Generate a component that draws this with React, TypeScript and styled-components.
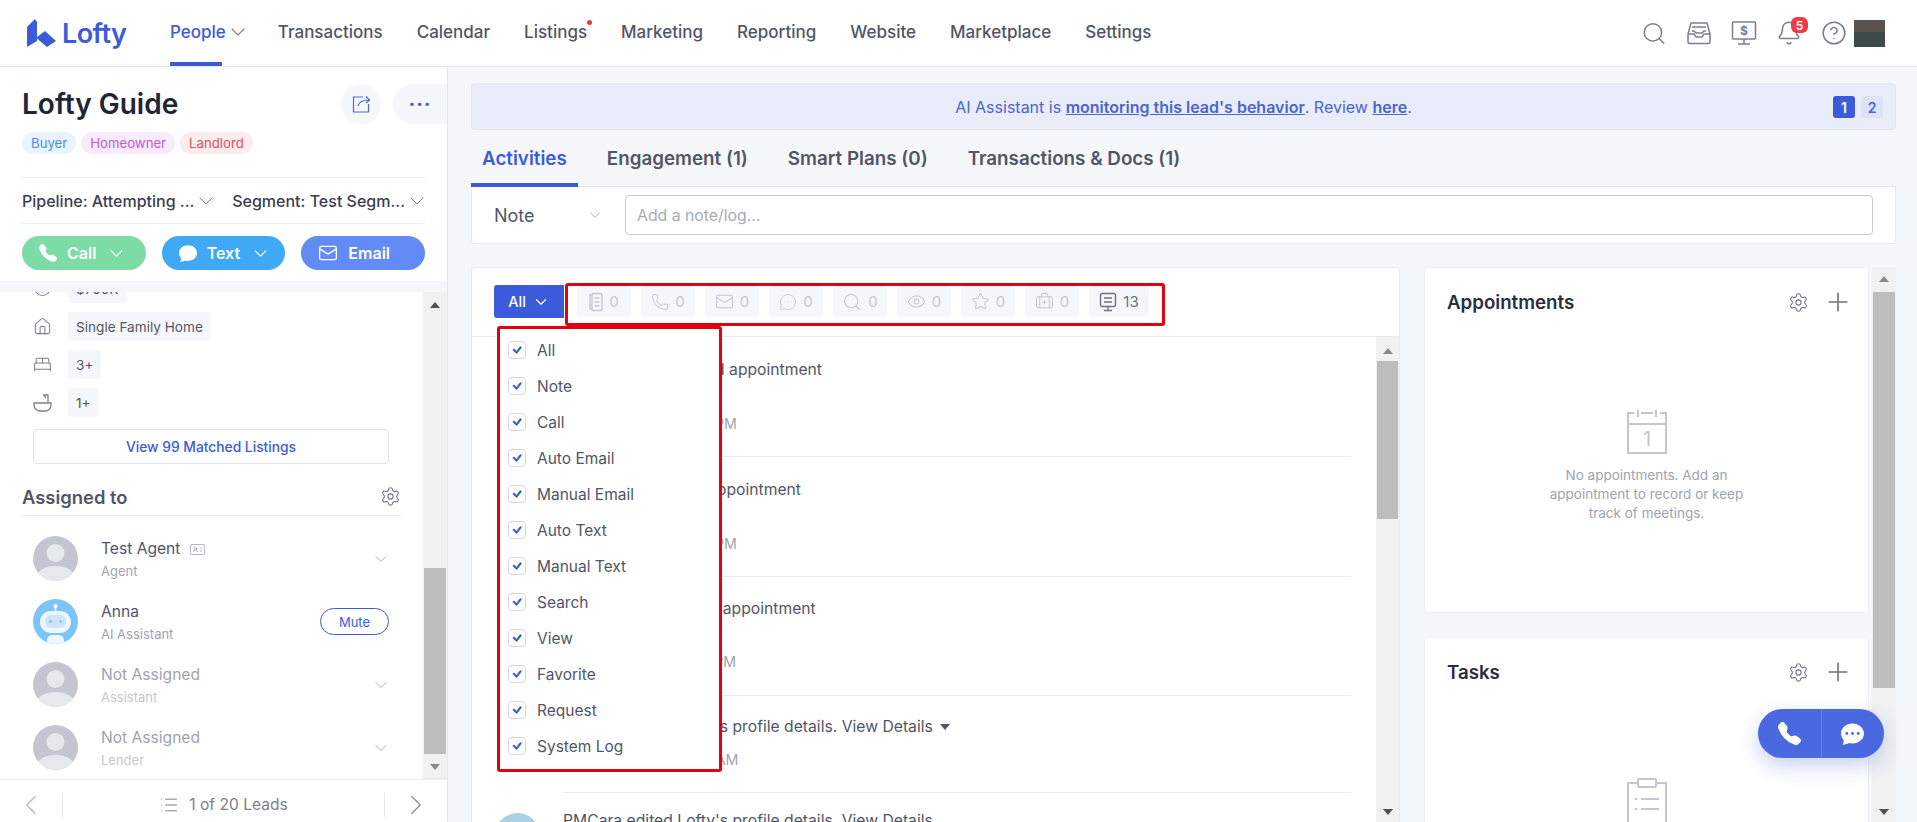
import { ReactNode } from 'react';
import styled, { createGlobalStyle } from 'styled-components';
import { BsTelephoneFill, BsChatFill, BsChatDotsFill, BsCheck } from 'react-icons/bs';
import {
  Search,
  Bell,
  CircleHelp,
  ChevronDown,
  ChevronLeft,
  ChevronRight,
  Settings,
  Plus,
  Mail,
  Phone,
  MessageCircleMore,
  Eye,
  Star,
  BriefcaseMedical,
  Home,
  BedDouble,
  List,
  IdCard,
  CircleDollarSign,
} from 'lucide-react';

const GlobalStyles = createGlobalStyle`
  html, body { margin: 0; padding: 0; height: 100%; overflow: hidden; }
  body {
    font-family: Inter, "Liberation Sans", sans-serif;
    color: #515666;
    background: #fff;
  }
  * { box-sizing: border-box; }
`;

const blue = '#3b5bdb';

const Page = styled.div`
  width: 1917px;
  height: 822px;
  display: flex;
  flex-direction: column;
  position: relative;
  overflow: hidden;
`;

const Header = styled.header`
  height: 67px;
  flex: none;
  display: flex;
  align-items: stretch;
  border-bottom: 1px solid #e3e6ef;
  background: #fff;
  padding-left: 27px;
`;

const Logo = styled.div`
  display: flex;
  align-items: center;
  gap: 6px;
  width: 143px;
  color: ${blue};
  font-size: 27px;
  font-weight: 600;
  letter-spacing: -0.6px;
`;

const Nav = styled.nav`
  display: flex;
  gap: 34px;
  flex: 1;
`;

const NavItem = styled.a<{ $active?: boolean }>`
  position: relative;
  display: flex;
  align-items: center;
  font-size: 17px;
  font-weight: 500;
  padding-bottom: 2px;
  color: ${(p) => (p.$active ? blue : '#515666')};
  height: 66px;
  svg { margin-right: -6px; }
  &::after {
    content: '';
    display: ${(p) => (p.$active ? 'block' : 'none')};
    position: absolute;
    left: 0;
    bottom: 0;
    width: 52px;
    height: 4px;
    background: ${blue};
  }
`;

const NavDot = styled.span`
  position: absolute;
  right: -5px;
  top: 20px;
  width: 5px;
  height: 5px;
  border-radius: 50%;
  background: #e5383b;
`;

const HeaderTools = styled.div`
  display: flex;
  align-items: center;
  gap: 19px;
  padding-right: 32px;
  color: #7d808a;
`;

const ToolIcon = styled.span`
  position: relative;
  width: 26px;
  height: 26px;
  display: flex;
  align-items: center;
  justify-content: center;
`;

const Badge = styled.span`
  position: absolute;
  left: 15px;
  top: -3px;
  min-width: 17px;
  height: 16px;
  border-radius: 6px;
  background: #ee3b4a;
  color: #fff;
  font-size: 12px;
  font-weight: 600;
  display: flex;
  align-items: center;
  justify-content: center;
`;

const AvatarBlock = styled.div`
  width: 31px;
  height: 27px;
  margin-left: -12px;
  background: linear-gradient(#5b514d 0 46%, #3e4a47 46% 100%);
`;

const Body = styled.div`
  flex: 1;
  min-height: 0;
  display: flex;
`;

const LeftPanel = styled.aside`
  width: 448px;
  flex: none;
  display: flex;
  flex-direction: column;
  border-right: 1px solid #e3e6ef;
  background: #fff;
`;

const LeadTop = styled.div`
  flex: none;
  height: 214px;
  padding: 15px 22px 0;
  display: flex;
  flex-direction: column;
`;

const TitleRow = styled.div`
  display: flex;
  align-items: center;
  height: 44px;
  margin-right: -22px;
`;

const LeadName = styled.h1`
  flex: 1;
  margin: 0;
  font-size: 28px;
  font-weight: 600;
  color: #202437;
`;

const RoundButton = styled.span<{ $clipped?: boolean }>`
  width: ${(p) => (p.$clipped ? '54px' : '40px')};
  height: 40px;
  margin-left: ${(p) => (p.$clipped ? '12px' : '0')};
  border-radius: ${(p) => (p.$clipped ? '20px 0 0 20px' : '50%')};
  background: #f6f7fb;
  color: ${blue};
  display: flex;
  align-items: center;
  justify-content: center;
  font-size: 20px;
  font-weight: 700;
  letter-spacing: 1px;
`;

const Tags = styled.div`
  display: flex;
  gap: 5px;
  margin-top: 6px;
`;

const Tag = styled.span<{ $bg: string; $fg: string }>`
  height: 22px;
  padding: 0 9px;
  border-radius: 11px;
  background: ${(p) => p.$bg};
  color: ${(p) => p.$fg};
  font-size: 13.2px;
  display: flex;
  align-items: center;
`;

const PipelineRow = styled.div`
  margin-top: 23px;
  height: 47px;
  border-top: 1px solid #ebedf3;
  border-bottom: 1px solid #ebedf3;
  display: flex;
  align-items: center;
  justify-content: space-between;
`;

const PipelineItem = styled.span`
  display: flex;
  align-items: center;
  font-size: 16px;
  font-weight: 500;
  color: #3a3f4f;
  svg { color: #7d808a; margin-right: -4px; }
`;

const ActionRow = styled.div`
  margin-top: 12px;
  display: flex;
  gap: 16px;
`;

const ActionButton = styled.span<{ $bg: string }>`
  width: 124px;
  height: 34px;
  border-radius: 17px;
  padding-left: 17px;
  background: ${(p) => p.$bg};
  color: #fff;
  font-size: 16px;
  font-weight: 600;
  display: flex;
  align-items: center;
  gap: 10px;
`;

const Band = styled.div`
  height: 11px;
  flex: none;
  background: #f6f7fb;
`;

const LeadScroll = styled.div`
  flex: 1;
  min-height: 0;
  display: flex;
  overflow: hidden;
`;

const LeadContent = styled.div`
  flex: 1;
  min-width: 0;
  padding: 0 22px;
  display: flex;
  flex-direction: column;
`;

const FactRow = styled.div`
  display: flex;
  align-items: center;
  gap: 16px;
  height: 29px;
  margin-bottom: 9px;
  padding-left: 11px;
  color: #7d808a;
  flex: none;
`;

const ClippedFact = styled(FactRow)`
  height: 11px;
  margin-bottom: 9px;
  overflow: hidden;
  align-items: flex-end;
  svg { margin-bottom: 6px; flex: none; }
`;

const FactChip = styled.span`
  height: 29px;
  padding: 0 8px;
  border-radius: 3px;
  background: #f6f7fb;
  color: #515666;
  font-size: 13.6px;
  display: flex;
  align-items: center;
  flex: none;
`;

const MatchedButton = styled.div`
  flex: none;
  height: 35px;
  margin: 3px 12px 0 11px;
  border: 1px solid #e1e3ea;
  border-radius: 4px;
  color: ${blue};
  font-size: 13.8px;
  font-weight: 500;
  display: flex;
  align-items: center;
  justify-content: center;
`;

const AssignedHead = styled.div`
  flex: none;
  margin-top: 14px;
  height: 38px;
  border-bottom: 1px solid #ebedf3;
  display: flex;
  align-items: center;
  justify-content: space-between;
  font-size: 18.4px;
  font-weight: 600;
  color: #515666;
  svg { color: #6f7280; }
`;

const PersonList = styled.div`
  flex: none;
  padding-top: 11px;
`;

const Person = styled.div`
  height: 63px;
  display: flex;
  align-items: center;
  padding: 0 12px 0 11px;
  gap: 23px;
`;

const PersonAvatar = styled.span`
  width: 45px;
  height: 45px;
  flex: none;
  display: block;
`;

const PersonInfo = styled.div`
  flex: 1;
  min-width: 0;
  padding-top: 2px;
  display: flex;
  flex-direction: column;
  gap: 5px;
`;

const PersonName = styled.div<{ $muted?: boolean }>`
  display: flex;
  align-items: center;
  gap: 9px;
  font-size: 15.6px;
  line-height: 18px;
  color: ${(p) => (p.$muted ? '#a0a3af' : '#515666')};
`;

const PersonRole = styled.div<{ $muted?: boolean }>`
  font-size: 13px;
  line-height: 16px;
  color: ${(p) => (p.$muted ? '#c6c8d0' : '#a0a3af')};
`;

const PersonChevron = styled.span`
  color: #a0a3af;
  display: flex;
  margin-right: -2px;
`;

const MuteButton = styled.span`
  width: 69px;
  height: 27px;
  border: 1px solid ${blue};
  border-radius: 14px;
  color: ${blue};
  font-size: 13px;
  display: flex;
  align-items: center;
  justify-content: center;
`;

const Scrollbar = styled.div<{ $w?: number }>`
  width: ${(p) => p.$w ?? 24}px;
  flex: none;
  background: #f1f1f1;
  display: flex;
  flex-direction: column;
  align-items: center;
`;

const ScrollArrow = styled.div<{ $down?: boolean; $dark?: boolean; $h?: number }>`
  flex: none;
  height: ${(p) => p.$h ?? 20}px;
  display: flex;
  align-items: center;
  &::before {
    content: '';
    border-left: 5px solid transparent;
    border-right: 5px solid transparent;
    ${(p) => (p.$down ? 'border-top' : 'border-bottom')}: 6px solid ${(p) => (p.$dark ? '#50505a' : '#8a8a8a')};
  }
`;

const ScrollGap = styled.div<{ $h?: number; $grow?: boolean }>`
  flex: ${(p) => (p.$grow ? 1 : 'none')};
  height: ${(p) => p.$h ?? 0}px;
`;

const ScrollThumb = styled.div<{ $h: number }>`
  flex: none;
  width: calc(100% - 2px);
  height: ${(p) => p.$h}px;
  background: #bdbdbd;
`;

const LeadFooter = styled.div`
  flex: none;
  height: 43px;
  padding-top: 7px;
  border-top: 1px solid #eceef3;
  box-shadow: 0 -1px 3px rgba(0, 0, 0, 0.04);
  display: flex;
  align-items: center;
  color: #b4b6c0;
`;

const FooterSide = styled.div<{ $right?: boolean }>`
  width: 63px;
  height: 24px;
  display: flex;
  align-items: center;
  justify-content: center;
  ${(p) => (p.$right ? 'border-left' : 'border-right')}: 1px solid #e3e6ef;
`;

const FooterCenter = styled.div`
  flex: 1;
  display: flex;
  align-items: center;
  justify-content: center;
  gap: 10px;
  font-size: 15.6px;
  color: #7d808a;
`;

const Main = styled.main`
  flex: 1;
  min-width: 0;
  background: #f6f7fb;
  padding: 16px 21px 0 23px;
  display: flex;
  flex-direction: column;
`;

const Banner = styled.div`
  position: relative;
  flex: none;
  height: 47px;
  background: #e9edf9;
  border: 1px solid #e1e6f3;
  border-radius: 4px;
  display: flex;
  align-items: center;
  justify-content: center;
  font-size: 16px;
  color: #4a65d0;
  a {
    font-weight: 600;
    text-decoration: underline;
  }
`;

const BannerPager = styled.div`
  position: absolute;
  right: 12px;
  top: 12px;
  display: flex;
  gap: 6px;
`;

const PagerCell = styled.span<{ $active?: boolean }>`
  width: 22px;
  height: 22px;
  border-radius: 3px;
  background: ${(p) => (p.$active ? blue : '#dde3f7')};
  color: ${(p) => (p.$active ? '#fff' : '#4a65d0')};
  font-size: 14px;
  font-weight: 600;
  display: flex;
  align-items: center;
  justify-content: center;
`;

const Tabs = styled.div`
  flex: none;
  height: 57px;
  display: flex;
  border-bottom: 1px solid #e3e6ef;
`;

const Tab = styled.div<{ $active?: boolean }>`
  padding: 4px 11px 0;
  margin-right: 18px;
  display: flex;
  align-items: center;
  height: 57px;
  font-size: 18.8px;
  font-weight: 600;
  color: ${(p) => (p.$active ? blue : '#515666')};
  border-bottom: 4px solid ${(p) => (p.$active ? blue : 'transparent')};
`;

const NoteCard = styled.div`
  flex: none;
  height: 57px;
  background: #fff;
  border: 1px solid #e8eaf0;
  border-top: none;
  border-radius: 0 0 4px 4px;
  display: flex;
  align-items: center;
  padding: 0 22px 0 22px;
`;

const NoteType = styled.div`
  width: 131px;
  display: flex;
  align-items: center;
  justify-content: space-between;
  padding-right: 21px;
  font-size: 18px;
  color: #515666;
  svg { color: #a0a3af; }
`;

const NoteInput = styled.div`
  flex: 1;
  height: 40px;
  border: 1px solid #c9ccd4;
  border-radius: 4px;
  padding-left: 11px;
  display: flex;
  align-items: center;
  font-size: 15.8px;
  color: #a9acb6;
`;

const Columns = styled.div`
  flex: 1;
  min-height: 0;
  margin-top: 23px;
  display: flex;
  gap: 24px;
`;

const ActivityCard = styled.section`
  position: relative;
  width: 929px;
  flex: none;
  background: #fff;
  border: 1px solid #e8eaf0;
  border-bottom: none;
  border-radius: 4px 4px 0 0;
  display: flex;
  flex-direction: column;
`;

const FilterRow = styled.div`
  flex: none;
  height: 69px;
  border-bottom: 1px solid #e8eaf0;
  display: flex;
  align-items: center;
  padding-left: 22px;
`;

const AllButton = styled.span`
  width: 70px;
  height: 33px;
  margin-top: -1px;
  margin-right: 13px;
  border-radius: 3px 0 0 3px;
  background: ${blue};
  color: #fff;
  font-size: 14.5px;
  font-weight: 500;
  display: flex;
  align-items: center;
  justify-content: center;
  gap: 6px;
`;

const FilterChips = styled.div`
  display: flex;
  gap: 10px;
  margin-top: -1px;
`;

const FilterChip = styled.span<{ $on?: boolean }>`
  height: 31px;
  width: ${(p) => (p.$on ? '60px' : '54px')};
  border-radius: 4px;
  background: #f6f7fb;
  color: ${(p) => (p.$on ? '#6f7280' : '#c6c8d0')};
  font-size: 15px;
  display: flex;
  align-items: center;
  justify-content: center;
  gap: 6px;
`;

const RedBox = styled.div`
  position: absolute;
  left: 93px;
  top: 15px;
  width: 600px;
  height: 43px;
  border: 3px solid #e3000f;
  border-radius: 3px;
  pointer-events: none;
`;

const Dropdown = styled.div`
  position: absolute;
  left: 25px;
  top: 58px;
  width: 225px;
  height: 446px;
  background: #fff;
  border: 3px solid #e3000f;
  border-radius: 3px;
  padding-top: 3px;
  display: flex;
  flex-direction: column;
  z-index: 2;
`;

const DropdownItem = styled.label`
  flex: none;
  height: 36px;
  display: flex;
  align-items: center;
  gap: 11px;
  padding-left: 8px;
  font-size: 15.5px;
  color: #515666;
`;

const CheckBox = styled.span`
  width: 18px;
  height: 18px;
  border: 1px solid #d6d8e2;
  border-radius: 4px;
  background: #fff;
  color: ${blue};
  display: flex;
  align-items: center;
  justify-content: center;
  flex: none;
`;

const ActivityBody = styled.div`
  flex: 1;
  min-height: 0;
  display: flex;
  overflow: hidden;
`;

const ActivityList = styled.div`
  flex: 1;
  min-width: 0;
  padding: 0 25px 0 23px;
  overflow: hidden;
`;

const ActivityRow = styled.div<{ $h: number; $pad: number; $line?: boolean }>`
  height: ${(p) => p.$h}px;
  position: relative;
  padding-left: 68px;
  padding-top: ${(p) => p.$pad}px;
  &::after {
    content: '';
    display: ${(p) => (p.$line ? 'block' : 'none')};
    position: absolute;
    left: 68px;
    right: 0;
    bottom: 0;
    height: 1px;
    background: #e8eaf0;
  }
`;

const RowTitle = styled.div`
  font-size: 15.7px;
  line-height: 18px;
  color: #515666;
  white-space: nowrap;
`;

const RowTime = styled.div<{ $gap: number }>`
  margin-top: ${(p) => p.$gap}px;
  font-size: 14.2px;
  line-height: 17px;
  color: #a0a3af;
`;

const Caret = styled.span`
  display: inline-block;
  margin-left: 7px;
  vertical-align: 2px;
  border-left: 5px solid transparent;
  border-right: 5px solid transparent;
  border-top: 6px solid #515666;
`;

const RowAvatar = styled.span`
  position: absolute;
  left: 0;
  top: 20px;
  width: 45px;
  height: 45px;
  border-radius: 50%;
  background: #a9d3e4;
`;

const SideColumn = styled.div`
  flex: 1;
  min-width: 0;
  display: flex;
  gap: 3px;
`;

const SideCards = styled.div`
  flex: 1;
  min-width: 0;
  display: flex;
  flex-direction: column;
  gap: 24px;
  overflow: hidden;
`;

const SideCard = styled.section<{ $h: number }>`
  flex: none;
  height: ${(p) => p.$h}px;
  background: #fff;
  border: 1px solid #eef0f5;
  border-radius: 4px;
  padding: 20px 15px 0 22px;
  display: flex;
  flex-direction: column;
`;

const SideHead = styled.div`
  flex: none;
  height: 28px;
  display: flex;
  align-items: center;
  gap: 14px;
  color: #6f7280;
  h3 {
    flex: 1;
    margin: 0;
    font-size: 18.7px;
    font-weight: 600;
    color: #2a2e3d;
  }
`;

const EmptyState = styled.div<{ $top: number }>`
  margin-top: ${(p) => p.$top}px;
  margin-right: 7px;
  display: flex;
  flex-direction: column;
  align-items: center;
  text-align: center;
  font-size: 13.5px;
  line-height: 19px;
  color: #a0a3af;
  svg { margin-bottom: 11px; }
`;

const FloatButton = styled.div`
  position: absolute;
  left: 1758px;
  top: 709px;
  width: 126px;
  height: 49px;
  border-radius: 25px;
  background: #4a68e0;
  box-shadow: 0 8px 20px rgba(74, 104, 224, 0.3);
  color: #fff;
  display: flex;
  z-index: 3;
`;

const FloatPart = styled.span<{ $border?: boolean }>`
  flex: 1;
  display: flex;
  align-items: center;
  justify-content: center;
  border-left: ${(p) => (p.$border ? '1px solid #6a83e6' : 'none')};
`;

const LogoMark = () => (
  <svg width="29" height="28" viewBox="0 0 29 28">
    <path d="M0 8 L8 0 L10 3 V18 L18 12 L29 22 L20 28 L10 19.5 V22 L0 28 Z" fill={blue} />
  </svg>
);

const InboxIcon = () => (
  <svg width="26" height="24" viewBox="0 0 26 24" fill="none" stroke="currentColor" strokeWidth="1.5">
    <path d="M2 13 L5 2 H21 L24 13 V21 a1.5 1.5 0 0 1-1.5 1.5 H3.5 A1.5 1.5 0 0 1 2 21 Z" />
    <path d="M6 6 H20 M2 13 H8 L10 16 H16 L18 13 H24" />
    <path d="M6 10 H8 L10 12 H16 L18 10 H20" />
  </svg>
);

const DollarMonitorIcon = () => (
  <svg width="26" height="26" viewBox="0 0 26 26" fill="none" stroke="currentColor" strokeWidth="1.5">
    <rect x="1.5" y="2" width="23" height="17" rx="1" />
    <path d="M13 19 V24 M7 24 H19" />
    <text x="13" y="15" fontSize="12" fontWeight="700" fill="currentColor" stroke="none" textAnchor="middle">$</text>
  </svg>
);

const NoteIcon = () => (
  <svg width="14" height="20" viewBox="0 0 14 20" fill="none" stroke="currentColor" strokeWidth="1.4">
    <rect x="3" y="1.5" width="10" height="17" rx="1" />
    <path d="M3 3 H1 V17 H3 M5.5 6 H10.5 M5.5 10 H10.5 M5.5 14 H10.5" />
  </svg>
);

const MonitorLinesIcon = () => (
  <svg width="18" height="20" viewBox="0 0 18 20" fill="none" stroke="currentColor" strokeWidth="1.4">
    <rect x="1.5" y="1.5" width="15" height="13" rx="2" />
    <path d="M5 6 H13 M5 10 H13 M9 14.5 V18.5 M5 18.5 H13" />
  </svg>
);

const ShareIcon = () => (
  <svg width="20" height="20" viewBox="0 0 20 20" fill="none" stroke="#4a68e0" strokeWidth="1.2">
    <path d="M12 3 H2.5 V18 H17.5 V10" />
    <path d="M7 12 C8 8 11 6 18 6 M15 2.5 L18.5 6 L15 9" />
  </svg>
);

const GuestAvatar = () => (
  <PersonAvatar>
    <svg width="45" height="45" viewBox="0 0 45 45">
      <defs>
        <clipPath id="guest-clip"><circle cx="22.5" cy="22.5" r="22.5" /></clipPath>
      </defs>
      <g clipPath="url(#guest-clip)">
        <rect width="45" height="45" fill="#c3c5d0" />
        <circle cx="22.5" cy="17" r="9" fill="#e7e8ee" />
        <ellipse cx="22.5" cy="41" rx="19" ry="11" fill="#e7e8ee" />
      </g>
    </svg>
  </PersonAvatar>
);

const RobotAvatar = () => (
  <PersonAvatar>
    <svg width="45" height="45" viewBox="0 0 45 45">
      <defs>
        <clipPath id="robot-clip"><circle cx="22.5" cy="22.5" r="22.5" /></clipPath>
      </defs>
      <g clipPath="url(#robot-clip)">
        <rect width="45" height="45" fill="#7cc4f8" />
        <path d="M22.5 6 V12" stroke="#fff" strokeWidth="1.6" />
        <circle cx="22.5" cy="7" r="2" fill="#fff" />
        <rect x="7" y="12" width="31" height="22" rx="11" fill="#eef6fd" />
        <rect x="12" y="16" width="21" height="13" rx="6" fill="#cfe3fa" />
        <circle cx="17.5" cy="22.5" r="1.4" fill="#7cc4f8" />
        <circle cx="27.5" cy="22.5" r="1.4" fill="#7cc4f8" />
        <rect x="14" y="36" width="17" height="12" rx="5" fill="#eef6fd" />
      </g>
    </svg>
  </PersonAvatar>
);

const CalendarEmpty = () => (
  <svg width="42" height="46" viewBox="0 0 42 46" fill="none" stroke="#c3c5d0" strokeWidth="2">
    <path d="M8 4 H2 V44 H40 V4 H34 M15 4 H27 M2 15 H40" />
    <path d="M12 1 V8 M30 1 V8" />
    <text x="21" y="37" fontSize="20" fill="#c3c5d0" stroke="none" textAnchor="middle">1</text>
  </svg>
);

const ClipboardEmpty = () => (
  <svg width="42" height="56" viewBox="0 0 42 56" fill="none" stroke="#c3c5d0" strokeWidth="2">
    <path d="M12 6 H2 V54 H40 V6 H30" />
    <rect x="12" y="2" width="18" height="8" rx="1" />
    <path d="M9 22 H11 M15 22 H33 M9 32 H11 M15 32 H33" />
  </svg>
);

const leadFacts: { icon: ReactNode; label: string }[] = [
  { icon: <Home size={19} strokeWidth={1.3} />, label: 'Single Family Home' },
  { icon: <BedDouble size={19} strokeWidth={1.3} />, label: '3+' },
  {
    icon: (
      <svg width="19" height="19" viewBox="0 0 19 19" fill="none" stroke="currentColor" strokeWidth="1.3">
        <path d="M1 10 H18 V12 a6 6 0 0 1-6 6 H7 a6 6 0 0 1-6-6 Z M15 10 V2 H10 M11 2 L13 5" />
      </svg>
    ),
    label: '1+',
  },
];

const people = [
  { name: 'Test Agent', role: 'Agent', card: true },
  { name: 'Anna', role: 'AI Assistant', robot: true },
  { name: 'Not Assigned', role: 'Assistant', muted: true },
  { name: 'Not Assigned', role: 'Lender', muted: true },
];

const chips: { icon: ReactNode; count: number }[] = [
  { icon: <NoteIcon />, count: 0 },
  { icon: <Phone size={18} strokeWidth={1.3} />, count: 0 },
  { icon: <Mail size={19} strokeWidth={1.3} />, count: 0 },
  { icon: <MessageCircleMore size={18} strokeWidth={1.3} />, count: 0 },
  { icon: <Search size={20} strokeWidth={1.3} />, count: 0 },
  { icon: <Eye size={19} strokeWidth={1.3} />, count: 0 },
  { icon: <Star size={19} strokeWidth={1.3} />, count: 0 },
  { icon: <BriefcaseMedical size={19} strokeWidth={1.3} />, count: 0 },
];

const filters = [
  'All',
  'Note',
  'Call',
  'Auto Email',
  'Manual Email',
  'Auto Text',
  'Manual Text',
  'Search',
  'View',
  'Favorite',
  'Request',
  'System Log',
];

const activities = [
  { h: 120, pad: 24, title: 'PMCara has arranged appointment', time: 'Nov 20, 2023 at 10:29 PM', gap: 36, line: true },
  { h: 120, pad: 24, title: 'PMCara has edited appointment', time: 'Nov 20, 2023 at 10:28 PM', gap: 36, line: true },
  { h: 119, pad: 23, title: 'PMCara has updated appointment', time: 'Nov 20, 2023 at 10:27 PM', gap: 35, line: true },
  { h: 97, pad: 22, title: "PMCara edited Lofty's profile details. View Details", time: 'Nov 20, 2023, at 10:12 AM', gap: 15, line: true, caret: true },
];

export default function App() {
  return (
    <Page>
      <GlobalStyles />
      <Header>
        <Logo>
          <LogoMark />
          Lofty
        </Logo>
        <Nav>
          <NavItem $active>
            People <ChevronDown size={24} strokeWidth={1.1} color="#7d808a" />
          </NavItem>
          <NavItem>Transactions</NavItem>
          <NavItem>Calendar</NavItem>
          <NavItem>
            Listings
            <NavDot />
          </NavItem>
          <NavItem>Marketing</NavItem>
          <NavItem>Reporting</NavItem>
          <NavItem>Website</NavItem>
          <NavItem>Marketplace</NavItem>
          <NavItem>Settings</NavItem>
        </Nav>
        <HeaderTools>
          <ToolIcon><Search size={27} strokeWidth={1.4} /></ToolIcon>
          <ToolIcon><InboxIcon /></ToolIcon>
          <ToolIcon><DollarMonitorIcon /></ToolIcon>
          <ToolIcon>
            <Bell size={26} strokeWidth={1.4} />
            <Badge>5</Badge>
          </ToolIcon>
          <ToolIcon><CircleHelp size={26} strokeWidth={1.4} /></ToolIcon>
          <AvatarBlock />
        </HeaderTools>
      </Header>
      <Body>
        <LeftPanel>
          <LeadTop>
            <TitleRow>
              <LeadName>Lofty Guide</LeadName>
              <RoundButton><ShareIcon /></RoundButton>
              <RoundButton $clipped>···</RoundButton>
            </TitleRow>
            <Tags>
              <Tag $bg="#eaf3fe" $fg="#4a90e8">Buyer</Tag>
              <Tag $bg="#f9ebfc" $fg="#b85cd8">Homeowner</Tag>
              <Tag $bg="#fdecec" $fg="#e2515c">Landlord</Tag>
            </Tags>
            <PipelineRow>
              <PipelineItem>Pipeline: Attempting ...<ChevronDown size={24} strokeWidth={1} /></PipelineItem>
              <PipelineItem>Segment: Test Segm...<ChevronDown size={24} strokeWidth={1} /></PipelineItem>
            </PipelineRow>
            <ActionRow>
              <ActionButton $bg="#7ddba6">
                <BsTelephoneFill size={18} /> Call <ChevronDown size={21} strokeWidth={1.3} />
              </ActionButton>
              <ActionButton $bg="#3fa9f5">
                <BsChatFill size={18} /> Text <ChevronDown size={21} strokeWidth={1.3} />
              </ActionButton>
              <ActionButton $bg="#628bf5">
                <Mail size={20} strokeWidth={1.6} /> Email
              </ActionButton>
            </ActionRow>
          </LeadTop>
          <Band />
          <LeadScroll>
            <LeadContent>
              <ClippedFact>
                <CircleDollarSign size={19} strokeWidth={1.3} />
                <FactChip>$700K</FactChip>
              </ClippedFact>
              {leadFacts.map((fact) => (
                <FactRow key={fact.label}>
                  {fact.icon}
                  <FactChip>{fact.label}</FactChip>
                </FactRow>
              ))}
              <MatchedButton>View 99 Matched Listings</MatchedButton>
              <AssignedHead>
                Assigned to
                <Settings size={21} strokeWidth={1.2} />
              </AssignedHead>
              <PersonList>
                {people.map((person, i) => (
                  <Person key={i}>
                    {person.robot ? <RobotAvatar /> : <GuestAvatar />}
                    <PersonInfo>
                      <PersonName $muted={person.muted}>
                        {person.name}
                        {person.card && <IdCard size={17} strokeWidth={1.1} color="#a0a3af" />}
                      </PersonName>
                      <PersonRole $muted={person.muted}>{person.role}</PersonRole>
                    </PersonInfo>
                    {person.robot ? (
                      <MuteButton>Mute</MuteButton>
                    ) : (
                      <PersonChevron><ChevronDown size={20} strokeWidth={1.1} /></PersonChevron>
                    )}
                  </Person>
                ))}
              </PersonList>
            </LeadContent>
            <Scrollbar>
              <ScrollArrow $dark $h={26} />
              <ScrollGap $grow />
              <ScrollThumb $h={186} />
              <ScrollArrow $down $h={25} />
            </Scrollbar>
          </LeadScroll>
          <LeadFooter>
            <FooterSide><ChevronLeft size={34} strokeWidth={0.9} /></FooterSide>
            <FooterCenter>
              <List size={20} strokeWidth={1.2} />
              1 of 20 Leads
            </FooterCenter>
            <FooterSide $right><ChevronRight size={34} strokeWidth={0.9} color="#8d909b" /></FooterSide>
          </LeadFooter>
        </LeftPanel>
        <Main>
          <Banner>
            <span>
              AI Assistant is <a>monitoring this lead's behavior</a>. Review <a>here</a>.
            </span>
            <BannerPager>
              <PagerCell $active>1</PagerCell>
              <PagerCell>2</PagerCell>
            </BannerPager>
          </Banner>
          <Tabs>
            <Tab $active>Activities</Tab>
            <Tab>Engagement (1)</Tab>
            <Tab>Smart Plans (0)</Tab>
            <Tab>Transactions &amp; Docs (1)</Tab>
          </Tabs>
          <NoteCard>
            <NoteType>Note <ChevronDown size={18} strokeWidth={1.2} /></NoteType>
            <NoteInput>Add a note/log...</NoteInput>
          </NoteCard>
          <Columns>
            <ActivityCard>
              <FilterRow>
                <AllButton>All <ChevronDown size={18} strokeWidth={1.6} /></AllButton>
                <FilterChips>
                  {chips.map((chip, i) => (
                    <FilterChip key={i}>{chip.icon}{chip.count}</FilterChip>
                  ))}
                  <FilterChip $on><MonitorLinesIcon />13</FilterChip>
                </FilterChips>
              </FilterRow>
              <RedBox />
              <Dropdown>
                {filters.map((name) => (
                  <DropdownItem key={name}>
                    <CheckBox><BsCheck size={22} strokeWidth={0.9} /></CheckBox>
                    {name}
                  </DropdownItem>
                ))}
              </Dropdown>
              <ActivityBody>
                <ActivityList>
                  {activities.map((a) => (
                    <ActivityRow key={a.title} $h={a.h} $pad={a.pad} $line={a.line}>
                      <RowTitle>{a.title}{a.caret && <Caret />}</RowTitle>
                      <RowTime $gap={a.gap}>{a.time}</RowTime>
                    </ActivityRow>
                  ))}
                  <ActivityRow $h={60} $pad={19}>
                    <RowAvatar />
                    <RowTitle>PMCara edited Lofty's profile details. View Details</RowTitle>
                  </ActivityRow>
                </ActivityList>
                <Scrollbar $w={23}>
                  <ScrollGap $h={4} />
                  <ScrollArrow />
                  <ScrollThumb $h={158} />
                  <ScrollGap $grow />
                  <ScrollArrow $down $dark />
                </Scrollbar>
              </ActivityBody>
            </ActivityCard>
            <SideColumn>
              <SideCards>
                <SideCard $h={346}>
                  <SideHead>
                    <h3>Appointments</h3>
                    <Settings size={21} strokeWidth={1.2} />
                    <Plus size={30} strokeWidth={1.3} />
                  </SideHead>
                  <EmptyState $top={93}>
                    <CalendarEmpty />
                    No appointments. Add an<br />appointment to record or keep<br />track of meetings.
                  </EmptyState>
                </SideCard>
                <SideCard $h={300}>
                  <SideHead>
                    <h3>Tasks</h3>
                    <Settings size={21} strokeWidth={1.2} />
                    <Plus size={30} strokeWidth={1.3} />
                  </SideHead>
                  <EmptyState $top={91}>
                    <ClipboardEmpty />
                  </EmptyState>
                </SideCard>
              </SideCards>
              <Scrollbar>
                <ScrollArrow $h={24} />
                <ScrollGap $h={1} />
                <ScrollThumb $h={396} />
                <ScrollGap $grow />
                <ScrollArrow $down $dark />
              </Scrollbar>
            </SideColumn>
          </Columns>
        </Main>
      </Body>
      <FloatButton>
        <FloatPart><BsTelephoneFill size={23} /></FloatPart>
        <FloatPart $border><BsChatDotsFill size={23} /></FloatPart>
      </FloatButton>
    </Page>
  );
}
